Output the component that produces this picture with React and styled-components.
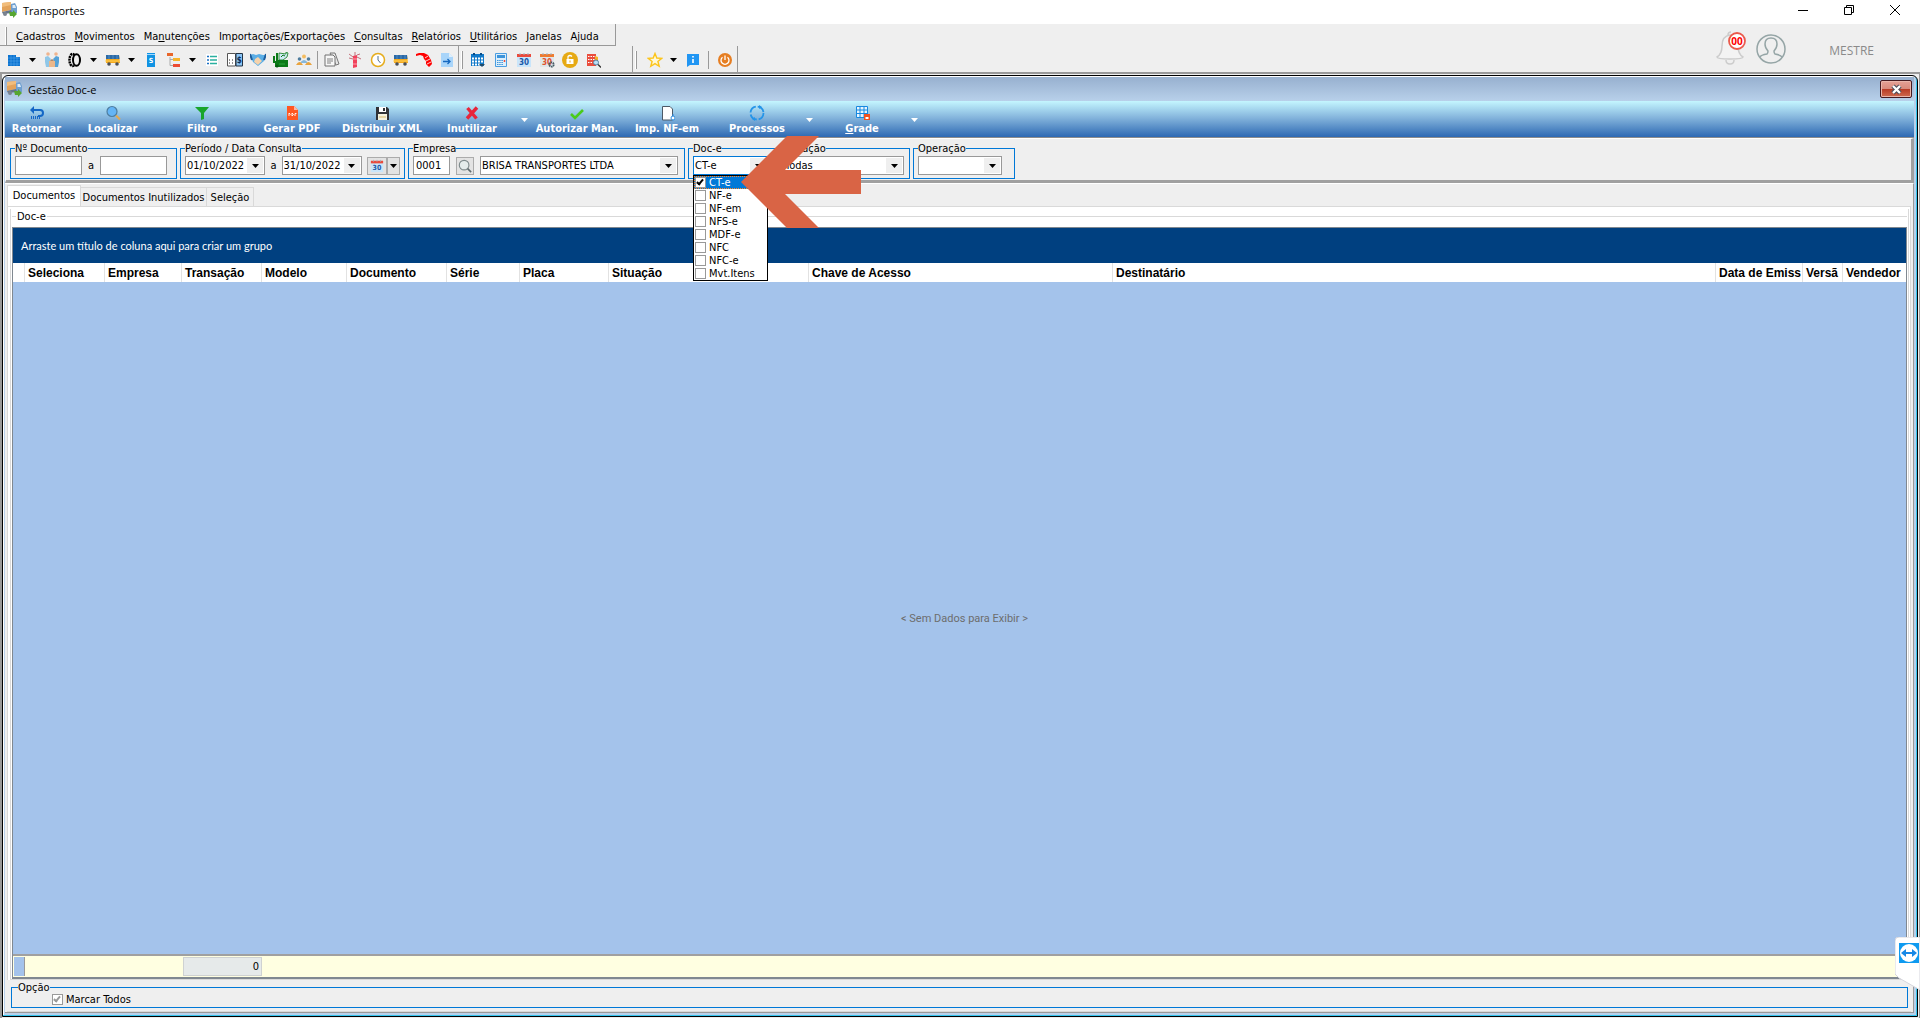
import React, { useState } from 'react';
import styled, { createGlobalStyle, css } from 'styled-components';

const ui = '"DejaVu Sans Condensed", Roboto, sans-serif';
const segoe = '"Open Sans", "Noto Sans", sans-serif';
const gridFont = 'Roboto, "Liberation Sans", sans-serif';
const bandFont = 'Lato, Roboto, sans-serif';
const headFont = '"Liberation Sans", Arial, sans-serif';

const GlobalStyle = createGlobalStyle`
  * {
    box-sizing: border-box;
  }
  body {
    margin: 0;
    background: #efefef;
    font-family: ${ui};
    font-size: 11px;
    color: #000;
  }
  button, input, select {
    font: inherit;
    color: inherit;
    margin: 0;
    padding: 0;
    border: 0;
    border-radius: 0;
    background: none;
  }
`;

/* ---------- main window ---------- */

const Page = styled.div`
  height: 100vh;
  display: flex;
  flex-direction: column;
  overflow: hidden;
`;

const TitleBar = styled.header`
  height: 24px;
  flex: none;
  display: flex;
  align-items: center;
  padding: 0 2px 4px 2px;
  background: #fff;
  font-family: ${segoe};
`;

const Title = styled.h1`
  margin: 0 0 0 5px;
  flex: 1;
  font-size: 11px;
  font-weight: normal;
`;

const SystemButton = styled.button`
  width: 46px;
  height: 20px;
  display: flex;
  align-items: center;
  justify-content: center;
`;

const TopArea = styled.div`
  flex: none;
  height: 48px;
  display: flex;
  justify-content: space-between;
`;

const MenuBar = styled.nav`
  height: 22px;
  width: 616px;
  display: flex;
  align-items: center;
  gap: 9px;
  padding: 3px 0 0 5px;
  border-right: 1px solid #999;
  border-bottom: 1px solid #999;
`;

const MenuButton = styled.button`
  white-space: nowrap;
`;

const Handle = styled.span`
  width: 2px;
  height: 18px;
  border-left: 1px solid #fff;
  border-right: 1px solid #999;
  margin-right: ${({ $gap }) => $gap || 0}px;
`;

const IconBars = styled.div`
  display: flex;
  height: 26px;
`;

const IconBar = styled.div`
  display: flex;
  align-items: center;
  padding-top: 2px;
  padding-left: 2px;
  padding-right: ${({ $end }) => $end || 0}px;
  border-right: 1px solid #999;
`;

const IconButton = styled.button`
  width: ${({ $caret }) => ($caret ? 15 : 23)}px;
  height: 22px;
  display: flex;
  align-items: center;
  justify-content: center;
`;

const Separator = styled.span`
  width: 1px;
  height: 18px;
  margin: 0 ${({ $wide }) => ($wide ? 4 : 2)}px;
  background: #999;
`;

const UserArea = styled.div`
  display: flex;
  align-items: center;
  padding: 2px 46px 0 0;
  font-family: ${segoe};
  font-size: 12px;
  color: #8a8a8a;
`;

const BellButton = styled.button`
  width: 30px;
  height: 36px;
  margin-right: 10px;
`;

const UserName = styled.span`
  margin-left: 43px;
  padding-top: 3px;
`;

/* ---------- child window ---------- */

const Desktop = styled.main`
  flex: 1;
  min-height: 0;
  display: flex;
  padding: 1px 1px 1px 0;
  border-top: 2px solid #999;
  border-left: 2px solid #999;
  border-right: 1px solid #999;
`;

const ChildWindow = styled.section`
  flex: 1;
  min-width: 0;
  display: flex;
  flex-direction: column;
  border: 1px solid #000;
  border-radius: 6px 6px 0 0;
  background: #b8d0ea;
  box-shadow: inset -1px -1px 0 #35c5ee, inset 1px 1px 0 #fff;
  padding: 1px 3px 3px 2px;
`;

const ChildTitle = styled.header`
  height: 24px;
  flex: none;
  display: flex;
  align-items: center;
  gap: 5px;
  padding: 0 2px;
  background: linear-gradient(#97b0cf, #b8d0ea);
  font-family: ${segoe};
`;

const ChildHeading = styled.h2`
  margin: 0;
  flex: 1;
  font-size: 11px;
  font-weight: normal;
`;

const CloseButton = styled.button`
  width: 32px;
  height: 18px;
  display: flex;
  align-items: center;
  justify-content: center;
  border: 1px solid #451a20;
  border-radius: 2px;
  background: linear-gradient(#e5a196 0, #d98b7d 48%, #b73a24 50%, #cf6b50 100%);
  box-shadow: inset 0 0 0 1px #e9b5aa;
`;

const Actions = styled.div`
  height: 37px;
  flex: none;
  display: flex;
  background: linear-gradient(#c4f6ff, #86b6dd 45%, #2d69b3);
  border-bottom: 1px solid #8c8c8c;
`;

const ActionButton = styled.button`
  width: ${({ $w }) => $w || 90}px;
  display: flex;
  flex-direction: column;
  align-items: center;
  padding-top: 4px;
  gap: 1px;
  color: #fff;
  font-weight: bold;
  line-height: 13px;
  white-space: nowrap;
`;

const ActionCaret = styled.button`
  width: 15px;
  display: flex;
  align-items: center;
  justify-content: center;
  padding-top: 2px;
`;

const Filters = styled.form`
  flex: none;
  height: 45px;
  display: flex;
  gap: 3px;
  padding: 3px 0 0 4px;
  background: #efefef;
  border-top: 1px solid #fff;
  border-left: 1px solid #fff;
  border-right: 3px solid #a0a0a0;
  border-bottom: 3px solid #a0a0a0;
`;

const Group = styled.fieldset`
  position: relative;
  width: ${({ $w }) => $w}px;
  height: 37px;
  margin: 0;
  padding: 1px 4px 0 4px;
  min-width: 0;
  border: 1px solid #0078d7;

  legend {
    padding: 0;
    line-height: 13px;
    height: 13px;
  }
`;

const Fields = styled.div`
  display: flex;
  align-items: center;
  gap: ${({ $gap }) => $gap || 0}px;
`;

const TextInput = styled.input`
  width: ${({ $w }) => $w}px;
  height: 19px;
  padding: 0 2px;
  border: 1px solid #999;
  background: #fff;
`;

const ComboBox = styled.div`
  position: relative;
  width: ${({ $w }) => $w}px;
  height: 19px;
  display: flex;
  align-items: center;
  border: 1px solid ${({ $active }) => ($active ? '#0078d7' : '#999')};
  background: #fff;

  input, select {
    flex: 1;
    min-width: 0;
    width: 100%;
    height: 17px;
    padding: 0 1px;
    appearance: none;
    outline: 0;
  }
`;

const ComboCaret = styled.span`
  position: absolute;
  right: 1px;
  top: 1px;
  width: 16px;
  height: 15px;
  display: flex;
  align-items: center;
  justify-content: center;
  background: #efefef;
  pointer-events: none;
`;

const SmallButton = styled.button`
  width: ${({ $w }) => $w}px;
  height: 18px;
  display: flex;
  align-items: center;
  justify-content: center;
  border: 1px solid #ababab;
  background: #e3e3e3;
`;

const DateButtons = styled.div`
  display: flex;
`;

const DropList = styled.ul`
  position: absolute;
  z-index: 2;
  left: 4px;
  top: 20px;
  width: 75px;
  margin: 0;
  padding: 0;
  list-style: none;
  border: 1px solid #000;
  background: #fff;
`;

const DropItem = styled.li`
  height: 13px;
  ${({ $selected }) =>
    $selected &&
    css`
      background: #0078d7;
      color: #fff;
      outline: 1px dotted #ff8728;
      outline-offset: -1px;
    `}

  label {
    display: flex;
    align-items: center;
    gap: 3px;
    height: 13px;
    line-height: 13px;
    padding-left: 1px;
    white-space: nowrap;
  }
`;

const tick = css`
  appearance: none;
  flex: none;
  width: 11px;
  height: 11px;
  border: 1px solid #999;
  background: #fff;

  &:checked::before {
    content: '';
    display: block;
    width: 2px;
    height: 5px;
    margin: 0 0 0 2px;
    border: solid ${({ $faded }) => ($faded ? '#999' : '#000')};
    border-width: 0 2px 2px 0;
    transform: rotate(40deg);
    box-sizing: content-box;
  }
`;

const CheckBox = styled.input.attrs({ type: 'checkbox' })`
  &&& {
    ${tick}
  }
`;

const Pointer = styled.svg`
  position: absolute;
  z-index: 3;
  left: 52px;
  top: -19px;
  pointer-events: none;
`;

/* ---------- tabs and grid ---------- */

const Content = styled.div`
  flex: 1;
  min-height: 0;
  display: flex;
  flex-direction: column;
  padding: 1px 2px 0 2px;
  background: #efefef;
  border-right: 1px solid #999;
  border-bottom: 1px solid #999;
  border-top: 1px solid #fff;
`;

const Tabs = styled.div`
  flex: none;
  height: 21px;
  display: flex;
  align-items: flex-end;
`;

const Tab = styled.button`
  height: ${({ $active }) => ($active ? 21 : 19)}px;
  width: ${({ $w }) => $w}px;
  padding-bottom: ${({ $active }) => ($active ? 2 : 0)}px;
  border: 1px solid #d9d9d9;
  border-left-width: ${({ $first }) => ($first ? 1 : 0)}px;
  border-bottom: 0;
  background: ${({ $active }) => ($active ? '#fff' : '#efefef')};
  white-space: nowrap;
`;

const TabPanel = styled.div`
  flex: 1;
  min-height: 0;
  display: flex;
  flex-direction: column;
  padding: 2px 1px 0 2px;
  background: #fff;
  border: 1px solid #d9d9d9;
  border-bottom: 0;
`;

const GridBox = styled.section`
  flex: 1;
  min-height: 0;
  display: flex;
  flex-direction: column;
  padding: 0 1px;
  border: 1px solid #d9d9d9;
  border-top: 0;
`;

const GridCaption = styled.h3`
  flex: none;
  height: 18px;
  margin: 0;
  padding-bottom: 4px;
  display: flex;
  align-items: center;
  gap: 1px;
  font-size: 11px;
  font-weight: normal;

  &::before, &::after {
    content: '';
    height: 1px;
    background: #d9d9d9;
  }
  &::before {
    width: 4px;
  }
  &::after {
    flex: 1;
  }
`;

const Grid = styled.div`
  flex: 1;
  min-height: 0;
  display: flex;
  flex-direction: column;
  border: 1px solid #808890;
  border-bottom-width: 2px;
  font-family: ${gridFont};
`;

const GroupBand = styled.div`
  flex: none;
  height: 35px;
  display: flex;
  align-items: center;
  padding-left: 8px;
  background: #004080;
  color: #fff;
  font-family: ${bandFont};
`;

const TableArea = styled.div`
  flex: 1;
  min-height: 0;
`;

const Table = styled.table`
  width: 100%;
  height: 100%;
  table-layout: fixed;
  border-collapse: separate;
  border-spacing: 0;

  th {
    height: 19px;
    padding: 0 2px 0 3px;
    white-space: nowrap;
    text-align: left;
    font-family: ${headFont};
    font-size: 12px;
    background: #fff;
    border-right: 1px solid #e2e2e2;
  }
  th:last-child {
    border-right: 0;
  }
`;

const EmptyCell = styled.td`
  padding: 0 0 0 10px;
  background: #a4c3eb;
  text-align: center;
  color: #6d6d6d;
`;

const FootCell = styled.td`
  height: 23px;
  padding: 1px 0;
  background: #ffffe1;
  border-top: 2px solid #a0a0a0;
`;

const FootMark = styled.span`
  display: block;
  height: 19px;
  margin-left: 1px;
  background: #a4c3eb;
  border-right: 1px solid #999;
`;

const Total = styled.output`
  display: block;
  height: 19px;
  margin-left: 1px;
  padding-right: 2px;
  border: 1px solid #cfd2d2;
  background: #e6eaea;
  text-align: right;
  line-height: 17px;
  font-family: ${ui};
`;

const OptionArea = styled.div`
  flex: none;
  padding: 1px 3px 3px 4px;
  border-bottom: 1px solid #d9d9d9;
`;

const Options = styled.fieldset`
  height: 27px;
  margin: 0;
  padding: 0 6px;
  border: 1px solid #0078d7;

  legend {
    padding: 0;
    height: 13px;
    line-height: 13px;
  }
  label {
    display: flex;
    align-items: center;
    gap: 3px;
    height: 11px;
    margin-left: 34px;
  }
`;

const SideTab = styled.button`
  position: fixed;
  z-index: 5;
  right: 0;
  bottom: 28px;
  width: 25px;
  height: 53px;
`;

/* ---------- icons ---------- */

const Svg = ({ size = 16, children }) => (
  <svg width={size} height={size} viewBox="0 0 16 16" aria-hidden="true">{children}</svg>
);

const Caret = ({ color = '#000' }) => (
  <svg width="7" height="4" viewBox="0 0 7 4" aria-hidden="true"><path d="M0 0h7L3.5 4z" fill={color} /></svg>
);

const TruckIcon = () => (
  <Svg>
    <path d="M0 1l9-1v8l-9 2z" fill="#e3a35b" />
    <path d="M0 1l9-1v3L0 5z" fill="#f1bd7c" />
    <path d="M9 2l4-1 2 4v6l-6 1z" fill="#6f9fd0" />
    <path d="M10.500 3h2.500l1 3h-3.500z" fill="#dcebf8" />
    <path d="M0 10l9-2 1 3-9 1z" fill="#64748a" />
    <circle cx="3" cy="12" r="2" fill="#7b8490" />
    <path d="M7 10h4V8l4 4-4 4v-2H8z" fill="#57a631" />
  </Svg>
);

const BusIcon = () => (
  <Svg>
    <path d="M1 3h13l1 8H1z" fill="#f4a81d" />
    <path d="M1 3h13l.5 4H1z" fill="#2c69a5" />
    <path d="M4 3v4M8 3v4M12 3v4" stroke="#4f8cc4" />
    <path d="M0 9h15" stroke="#ffd35a" />
    <circle cx="4" cy="12" r="1.800" fill="#4a4f57" />
    <circle cx="12" cy="12" r="1.800" fill="#4a4f57" />
  </Svg>
);

const CalendarIcon = ({ gear, top = '#e94b3c', size }) => (
  <Svg size={size}>
    <path d="M1 4h14v11H1z" fill={gear ? '#dfe6e8' : '#c9e5fa'} />
    <path d="M1 2h14v3H1z" fill={top} />
    <path d="M4 1v2M8 1v2M12 1v2" stroke="#9fb4c4" />
    <text x="8" y="13" textAnchor="middle" fontSize="8" fontWeight="bold" fill={gear ? '#e0522f' : '#1a58a8'}>30</text>
    {gear && <circle cx="12.500" cy="12.500" r="2.200" fill="none" stroke="#455a64" strokeWidth="1.800" strokeDasharray="1.500 .6" />}
  </Svg>
);

const icons = {
  building: (
    <Svg>
      <path d="M2 3h8v2h4v9H2z" fill="#0a73d0" />
      <path d="M2 6h12M2 9h12M2 12h12M5 3v11M8 3v11M11 5v9" stroke="#4fa3ea" strokeWidth=".6" />
    </Svg>
  ),
  people: (
    <Svg>
      <circle cx="4" cy="2" r="1.800" fill="#efb48e" />
      <circle cx="12" cy="2" r="1.800" fill="#efb48e" />
      <path d="M1 5l3-1 3 3-1 2-1 6H2L1 10z" fill="#8fc7e8" />
      <path d="M15 5l-3-1-3 3 1 2 1 6h3l1-5z" fill="#54a2d8" />
      <path d="M5 9h6v6H5z" fill="#eab78b" />
      <path d="M7 9V8h2v1" stroke="#9b6843" fill="none" />
    </Svg>
  ),
  tire: (
    <Svg>
      <ellipse cx="5.500" cy="8" rx="3" ry="6" fill="none" stroke="#000" strokeWidth="2.500" strokeDasharray="2 .7" />
      <ellipse cx="9.500" cy="8" rx="3.500" ry="5.800" fill="#efefef" stroke="#000" strokeWidth="2" />
    </Svg>
  ),
  bus: <BusIcon />,
  book: (
    <Svg>
      <path d="M4 1h8v14H4z" fill="#1193e3" />
      <path d="M4 2.500h8" stroke="#9fd8ff" />
      <text x="8" y="11" textAnchor="middle" fontSize="7" fontWeight="bold" fill="#fff">S</text>
    </Svg>
  ),
  tree: (
    <Svg>
      <path d="M1 1h6v3H1z" fill="#e8662a" />
      <path d="M7 6h7v3H7z" fill="#f7b52a" />
      <path d="M7 12h7v3H7z" fill="#ec4c33" />
      <path d="M4 5v8.500h3M4 7.500h3" stroke="#aaa" fill="none" />
    </Svg>
  ),
  list: (
    <Svg>
      <path d="M2 2h12v12H2z" fill="#fff" />
      <path d="M3 4.500h2M3 8h2M3 11.500h2" stroke="#1a6fc4" strokeWidth="1.400" />
      <path d="M6 4.500h7M6 8h7M6 11.500h7" stroke="#2bb0a0" strokeWidth="1.400" />
    </Svg>
  ),
  ledger: (
    <Svg>
      <path d="M.5 1.500h8V14h-8z" fill="#fff" stroke="#555" />
      <path d="M9 1.500h6.500V14H9z" fill="#8cc4f4" stroke="#234" />
      <path d="M2 8h1m2 0h1M2 11h1m2 0h1" stroke="#222" />
      <text x="12.300" y="11" textAnchor="middle" fontSize="8" fontWeight="bold" fill="#0a2b55">$</text>
    </Svg>
  ),
  hands: (
    <Svg>
      <path d="M0 3l3-1 3 1 3-1 4 1 3 0-2 6-6 5-5-4z" fill="#5baee6" />
      <path d="M5 7l3-2 4 4-4 4-4-3z" fill="#f6d3ac" />
      <path d="M0 2l2 6M16 2l-2 6" stroke="#1c5c9c" strokeWidth="2" />
    </Svg>
  ),
  forklift: (
    <Svg>
      <path d="M0 4h2v7H0zM3 1h2v7h10v7H2V9h1z" fill="#0b7a18" />
      <path d="M6 1l7 1V0l2 1-1 4-4 3H6z" fill="#cfe9f4" stroke="#0b7a18" strokeWidth=".8" />
      <path d="M8 5l2-2 2 1" stroke="#0b7a18" fill="none" />
      <circle cx="4" cy="14" r="1.500" fill="#075d11" />
      <path d="M6 12h6" stroke="#2aa53a" />
    </Svg>
  ),
  group: (
    <Svg>
      <circle cx="8" cy="4.500" r="2" fill="#f4bd61" />
      <circle cx="3.500" cy="7" r="1.800" fill="#4f7d9e" />
      <circle cx="12.500" cy="7" r="1.800" fill="#4f7d9e" />
      <path d="M4 11q4-6 8 0z" fill="#86b8dd" />
      <path d="M0 13q3.500-6 7 0zM9 13q3.500-6 7 0z" fill="#e9a33e" />
    </Svg>
  ),
  papers: (
    <Svg>
      <path d="M6 1h5l4 11-3 1z" fill="#e6e6e6" stroke="#777" />
      <path d="M1 3h8l2 2v9H1z" fill="#f7f7f7" stroke="#707070" />
      <path d="M3 7h6M3 9h6M3 11h4" stroke="#808080" />
    </Svg>
  ),
  flare: (
    <Svg>
      <path d="M6 4l4-1v12l-4 1z" fill="#f0425c" />
      <path d="M6 5L2 2M8 4V0M10 3l3-1M10 5l4 2M6 7L2 6" stroke="#c4707b" />
      <path d="M6 7h4M6 12h4" stroke="#ff9aaa" />
    </Svg>
  ),
  clock: (
    <Svg>
      <circle cx="8" cy="8" r="6.500" fill="#fff" stroke="#e6ad1d" strokeWidth="1.500" />
      <path d="M8 4v4l2.500 3" stroke="#52708b" fill="none" />
    </Svg>
  ),
  fuel: (
    <Svg>
      <path d="M0 2l3-1h5l4 2 3 5 1 4-3 3-3-3V9L8 7l-1-3-3-1-4 1z" fill="#f00" />
      <path d="M9 6l3-2M10 9l4-2M11 12l4-2" stroke="#fff" strokeWidth=".8" />
    </Svg>
  ),
  exportDoc: (
    <Svg>
      <path d="M2 1h8l4 4v10H2z" fill="#a9d5fa" />
      <path d="M10 1v4h4z" fill="#deeffd" />
      <path d="M4 9.500h7M8.500 7l2.500 2.500L8.500 12" stroke="#1668c0" fill="none" strokeWidth="1.300" />
    </Svg>
  ),
  schedule: (
    <Svg>
      <path d="M1 2h13v12H1z" fill="#1279c9" />
      <path d="M2 6.500h11M2 9.500h11M2 12.500h8" stroke="#fff" strokeWidth="1.800" strokeDasharray="2 1" />
      <path d="M4 1v2M11 1v2" stroke="#0a4b84" strokeWidth="2" />
      <path d="M9 12h6l-3 3z" fill="#244b66" />
    </Svg>
  ),
  calc: (
    <Svg>
      <path d="M2.500 1.500h11v13h-11z" fill="#dceefb" stroke="#4a9de0" />
      <path d="M4 3h8v3H4z" fill="#3b94db" />
      <path d="M4 8.500h6M4 10.500h6M4 12.500h6" stroke="#3b94db" strokeDasharray="1.500 .7" />
      <path d="M11.500 8v2" stroke="#ec4a3a" strokeWidth="1.500" />
    </Svg>
  ),
  calendar: <CalendarIcon />,
  calendarGear: <CalendarIcon gear top="#ee7b30" />,
  lock: (
    <Svg>
      <circle cx="8" cy="8" r="8" fill="#e6a913" />
      <path d="M4.500 7h7v5h-7z" fill="#fff" />
      <path d="M6 7V4.500q2-2 4 0" fill="none" stroke="#fff" strokeWidth="1.200" />
      <path d="M8 8.500v2" stroke="#e6a913" />
    </Svg>
  ),
  buildingSearch: (
    <Svg>
      <path d="M2 2h9v12H2z" fill="#ea4d3d" />
      <path d="M3 4.500h8M3 7.500h8M3 10.500h8" stroke="#fff" strokeDasharray="1.500 1" strokeWidth="1.200" />
      <path d="M10 4l3 1v4h-3z" fill="#f2b22b" />
      <circle cx="11" cy="10.500" r="2.500" fill="#b8def7" stroke="#5a7f9e" />
      <path d="M13 12.500l3 3" stroke="#333" strokeWidth="1.300" />
    </Svg>
  ),
  star: <Svg><path d="M8 1.500l1.800 4.500 5 .3-3.900 3.100 1.300 4.900L8 11.600l-4.200 2.700 1.300-4.900L1.200 6.300l5-.3z" fill="#fff9d8" stroke="#fcc419" strokeWidth="1.400" /></Svg>,
  info: (
    <Svg>
      <path d="M2 2h12v11H5l-3 2z" fill="#2196f3" />
      <path d="M8 4v1.500M8 7v4" stroke="#fff" strokeWidth="1.600" />
    </Svg>
  ),
  power: (
    <Svg>
      <circle cx="8" cy="8" r="7" fill="#e67e22" />
      <path d="M5.500 5.200a4 4 0 1 0 5 0M8 3.500V8" fill="none" stroke="#fff" strokeWidth="1.300" />
    </Svg>
  ),
  back: (
    <Svg>
      <path d="M1 5l4-4v3h6q4 0 4 4t-4 4H9v-2h2q2 0 2-2t-2-2H5v3z" fill="#1467c6" />
      <path d="M2 12.500h1m1 0h1m1 0h1m1 0h1m1 0h1" stroke="#1467c6" strokeWidth="3" />
    </Svg>
  ),
  search: (
    <Svg>
      <circle cx="7" cy="6.500" r="5" fill="#64b5f6" stroke="#4e7d9f" strokeWidth="1.200" />
      <path d="M11 10.500l4 4" stroke="#e5a94d" strokeWidth="2" />
    </Svg>
  ),
  funnel: <Svg><path d="M1 2h14L10 8v6l-3 1V8z" fill="#18a52b" /></Svg>,
  pdf: (
    <Svg>
      <path d="M3 1h7l4 4v10H3z" fill="#ff5722" />
      <path d="M10 1v4h4z" fill="#ffb9a3" />
      <path d="M5 11V8l1.500 1.500M8 11V8l1.500 1.500L8 11M11 11V8.500h1.500" stroke="#fff" fill="none" strokeWidth=".9" />
    </Svg>
  ),
  disk: (
    <Svg>
      <path d="M2 2h11l2 2v11H2z" fill="#303236" />
      <path d="M5 2h7v5H5z" fill="#fff" />
      <path d="M9 3h2v3H9z" fill="#303236" />
      <path d="M4 9h9v6H4z" fill="#f4f1de" />
      <path d="M5 12h7" stroke="#d9b968" />
    </Svg>
  ),
  cross: <Svg><path d="M3.500 3l9 10.500M13 2.500L3 13.500" stroke="#e8253a" strokeWidth="3.400" /></Svg>,
  check: <Svg><path d="M2 9l4 4 8-8" fill="none" stroke="#4acb1c" strokeWidth="2.600" /></Svg>,
  docEdit: (
    <Svg>
      <path d="M3.500 1.500H11L13.500 4v11h-10z" fill="#fff" stroke="#4d5a66" />
      <circle cx="14" cy="13" r="2" fill="#fff" stroke="#2b8de0" />
      <path d="M14 9v2" stroke="#2b8de0" />
    </Svg>
  ),
  process: (
    <Svg>
      <circle cx="8" cy="8" r="6.500" fill="none" stroke="#2494e8" strokeWidth="1.800" strokeDasharray="8.200 2" />
      <path d="M10 0v4l3-2zM6 16v-4l-3 2z" fill="#2494e8" />
    </Svg>
  ),
  grid: (
    <Svg>
      <path d="M2.500 1.500h11v11h-11zM2.500 5h11M2.500 8.500h11M6 1.500v11M10 1.500v11" fill="#e7f5ff" stroke="#1788e0" />
      <path d="M10 9h6v6h-6z" fill="#f4511e" />
      <path d="M11.500 12h3v2h-3z" fill="#fff" />
    </Svg>
  ),
};

/* ---------- data ---------- */

const menus = [
  ['', 'C', 'adastros'],
  ['', 'M', 'ovimentos'],
  ['Ma', 'n', 'utenções'],
  ['Importações/Exportações', '', ''],
  ['', 'C', 'onsultas'],
  ['', 'R', 'elatórios'],
  ['', 'U', 'tilitários'],
  ['', 'J', 'anelas'],
  ['A', 'j', 'uda'],
];

const mainIcons = [
  'building', 'caret', 'people', 'tire', 'caret', 'bus', 'caret', 'book', 'tree', 'caret', 'list',
  'ledger', 'hands', 'forklift', 'group', '|', 'papers', 'flare', 'clock', 'bus', 'fuel', 'exportDoc',
];
const toolIcons = ['schedule', 'calc', 'calendar', 'calendarGear', 'lock', 'buildingSearch'];
const favIcons = ['star', 'caret', 'info', '||', 'power'];

const actions = [
  { label: 'Retornar', icon: 'back', w: 63 },
  { label: 'Localizar', icon: 'search', w: 89 },
  { label: 'Filtro', icon: 'funnel' },
  { label: 'Gerar PDF', icon: 'pdf' },
  { label: 'Distribuir XML', icon: 'disk' },
  { label: 'Inutilizar', icon: 'cross', menu: true },
  { label: 'Autorizar Man.', icon: 'check' },
  { label: 'Imp. NF-em', icon: 'docEdit' },
  { label: 'Processos', icon: 'process', menu: true },
  { label: <span><u>G</u>rade</span>, icon: 'grid', menu: true },
];

const docTypes = ['CT-e', 'NF-e', 'NF-em', 'NFS-e', 'MDF-e', 'NFC', 'NFC-e', 'Mvt.Itens'];

const columns = [
  ['', 12],
  ['Seleciona', 80],
  ['Empresa', 77],
  ['Transação', 80],
  ['Modelo', 85],
  ['Documento', 100],
  ['Série', 73],
  ['Placa', 89],
  ['Situação', 200],
  ['Chave de Acesso', 304],
  ['Destinatário'],
  ['Data de Emiss', 87],
  ['Versã', 40],
  ['Vendedor', 63],
];

const IconRow = ({ names }) =>
  names.map((name, i) => {
    if (name === '|' || name === '||') return <Separator key={i} $wide={name === '||'} />;
    if (name === 'caret') return <IconButton key={i} $caret aria-label="Mais opções"><Caret /></IconButton>;
    return <IconButton key={i} aria-label={name}>{icons[name]}</IconButton>;
  });

const DateField = ({ label, value }) => (
  <ComboBox $w={83}>
    <input aria-label={label} defaultValue={value} />
    <ComboCaret><Caret /></ComboCaret>
  </ComboBox>
);

const SelectField = ({ label, value, w, active }) => (
  <ComboBox $w={w} $active={active}>
    <select aria-label={label}><option>{value}</option></select>
    <ComboCaret><Caret /></ComboCaret>
  </ComboBox>
);

const DocTypeGroup = () => {
  const [checked, setChecked] = useState(['CT-e']);
  const toggle = (name) =>
    setChecked(checked.includes(name) ? checked.filter((c) => c !== name) : [...checked, name]);

  return (
    <Group $w={87}>
      <legend>Doc-e</legend>
      <SelectField label="Doc-e" value="CT-e" w={75} active />
      <DropList>
        {docTypes.map((name, i) => (
          <DropItem key={name} $selected={i === 0}>
            <label>
              <CheckBox checked={checked.includes(name)} onChange={() => toggle(name)} />
              {name}
            </label>
          </DropItem>
        ))}
      </DropList>
      <Pointer width="120" height="92" viewBox="0 0 120 92" aria-hidden="true">
        <path d="M0 46L46 0h32L44 34h76v24H44l34 34H46z" fill="#d96445" />
      </Pointer>
    </Group>
  );
};

const App = () => (
  <Page>
    <GlobalStyle />
    <TitleBar>
      <TruckIcon />
      <Title>Transportes</Title>
      <SystemButton aria-label="Minimizar"><svg width="10" height="10"><path d="M0 5.500h10" stroke="#000" /></svg></SystemButton>
      <SystemButton aria-label="Restaurar">
        <svg width="10" height="10"><path d="M.5 2.500h7v7h-7zM2.500 2.500v-2h7v7h-2" fill="none" stroke="#000" /></svg>
      </SystemButton>
      <SystemButton aria-label="Fechar"><svg width="10" height="10"><path d="M0 0l10 10M10 0L0 10" stroke="#000" /></svg></SystemButton>
    </TitleBar>

    <TopArea>
      <div>
        <MenuBar>
          <Handle />
          {menus.map(([before, key, after]) => (
            <MenuButton key={before + key + after}>{before}<u>{key}</u>{after}</MenuButton>
          ))}
        </MenuBar>
        <IconBars>
          <IconBar><IconRow names={mainIcons} /></IconBar>
          <IconBar $end={28}><Handle $gap={3} /><IconRow names={toolIcons} /></IconBar>
          <IconBar $end={1}><Handle $gap={6} /><IconRow names={favIcons} /></IconBar>
        </IconBars>
      </div>
      <UserArea>
        <BellButton aria-label="Notificações">
          <svg width="30" height="36" viewBox="0 0 30 36">
            <path d="M14 4q-8 1-8 11 0 8-5 11 0 2 13 2t13-2q-5-3-5-11 0-10-8-11z" fill="#f3f3f3" stroke="#ccc" strokeWidth="1.500" />
            <path d="M10 29q0 4 4 4t4-4M12 4q0-3 3-3" fill="none" stroke="#ccc" strokeWidth="1.500" />
            <circle cx="21" cy="10" r="8" fill="#fff" stroke="#ea5a4c" strokeWidth="1.800" />
            <text x="21" y="14" textAnchor="middle" fontSize="10" fontWeight="bold" fill="#f00">00</text>
          </svg>
        </BellButton>
        <svg width="30" height="30" viewBox="0 0 30 30" fill="none" stroke="#95a5a6" strokeWidth="1.500">
          <circle cx="15" cy="15" r="14" />
          <path d="M4 23q1-2 7-3 1-1 1-3-3-3-3-7 0-6 6-6t6 6q0 4-3 7 0 2 1 3 6 1 7 3" />
        </svg>
        <UserName>MESTRE</UserName>
      </UserArea>
    </TopArea>

    <Desktop>
      <ChildWindow>
        <ChildTitle>
          <TruckIcon />
          <ChildHeading>Gestão Doc-e</ChildHeading>
          <CloseButton aria-label="Fechar Gestão Doc-e">
            <svg width="13" height="11" viewBox="0 0 13 11">
              <path d="M3 2l7 7M10 2L3 9" stroke="#4d4f5c" strokeWidth="4.500" />
              <path d="M3 2l7 7M10 2L3 9" stroke="#fff" strokeWidth="2.300" />
            </svg>
          </CloseButton>
        </ChildTitle>

        <Actions>
          {actions.map(({ label, icon, w, menu }) => (
            <React.Fragment key={icon}>
              <ActionButton $w={w}>{icons[icon]}{label}</ActionButton>
              {menu && <ActionCaret aria-label="Mais opções"><Caret color="#fff" /></ActionCaret>}
            </React.Fragment>
          ))}
        </Actions>

        <Filters>
          <Group $w={167}>
            <legend>Nº Documento</legend>
            <Fields $gap={6}>
              <TextInput $w={67} aria-label="Documento inicial" />
              a
              <TextInput $w={67} aria-label="Documento final" />
            </Fields>
          </Group>
          <Group $w={225}>
            <legend>Período / Data Consulta</legend>
            <Fields $gap={5}>
              <DateField label="Data inicial" value="01/10/2022" />
              a
              <DateField label="Data final" value="31/10/2022" />
              <DateButtons>
                <SmallButton $w={20} type="button" aria-label="Calendário"><CalendarIcon size={14} /></SmallButton>
                <SmallButton $w={13} type="button" aria-label="Períodos"><Caret /></SmallButton>
              </DateButtons>
            </Fields>
          </Group>
          <Group $w={277}>
            <legend>Empresa</legend>
            <Fields $gap={6}>
              <TextInput $w={37} aria-label="Código da empresa" defaultValue="0001" />
              <SmallButton $w={18} type="button" aria-label="Buscar empresa">
                <Svg size={14}>
                  <circle cx="7" cy="7" r="5.500" fill="#e4ecec" stroke="#7d8a8c" strokeWidth="1.300" />
                  <path d="M11 11l4 4" stroke="#5f6b6e" strokeWidth="1.800" />
                </Svg>
              </SmallButton>
              <SelectField label="Empresa" value="BRISA TRANSPORTES LTDA" w={198} />
            </Fields>
          </Group>
          <DocTypeGroup />
          <Group $w={132}>
            <legend>Situação</legend>
            <SelectField label="Situação" value="Todas" w={121} />
          </Group>
          <Group $w={102}>
            <legend>Operação</legend>
            <SelectField label="Operação" value="" w={84} />
          </Group>
        </Filters>

        <Content>
          <Tabs role="tablist">
            <Tab role="tab" aria-selected="true" $active $first $w={74}>Documentos</Tab>
            <Tab role="tab" $w={126}>Documentos Inutilizados</Tab>
            <Tab role="tab" $w={47}>Seleção</Tab>
          </Tabs>
          <TabPanel>
            <GridBox>
              <GridCaption>Doc-e</GridCaption>
              <Grid>
                <GroupBand>Arraste um título de coluna aqui para criar um grupo</GroupBand>
                <TableArea>
                  <Table>
                    <colgroup>
                      {columns.map(([name, w]) => <col key={name} width={w} />)}
                    </colgroup>
                    <thead>
                      <tr>{columns.map(([name]) => <th key={name}>{name}</th>)}</tr>
                    </thead>
                    <tbody>
                      <tr><EmptyCell colSpan={14}>&lt; Sem Dados para Exibir &gt;</EmptyCell></tr>
                    </tbody>
                    <tfoot>
                      <tr>
                        <FootCell><FootMark /></FootCell>
                        <FootCell colSpan={2} />
                        <FootCell><Total>0</Total></FootCell>
                        <FootCell colSpan={10} />
                      </tr>
                    </tfoot>
                  </Table>
                </TableArea>
              </Grid>
            </GridBox>
          </TabPanel>
          <OptionArea>
            <Options>
              <legend>Opção</legend>
              <label>
                <CheckBox $faded defaultChecked />
                Marcar Todos
              </label>
            </Options>
          </OptionArea>
        </Content>
      </ChildWindow>
    </Desktop>

    <SideTab aria-label="TeamViewer">
      <svg width="25" height="53" viewBox="0 0 25 53">
        <path d="M25 0H4Q0 0 0 4v33l4 4 21 12z" fill="#fff" stroke="#d5d5dc" />
        <path d="M4 6h20v20H4z" fill="#0e9af0" />
        <circle cx="14" cy="16" r="9" fill="#fff" />
        <path d="M6 16l5-4v3h6v-3l5 4-5 4v-3h-6v3z" fill="#1688e6" />
      </svg>
    </SideTab>
  </Page>
);

export default App;
